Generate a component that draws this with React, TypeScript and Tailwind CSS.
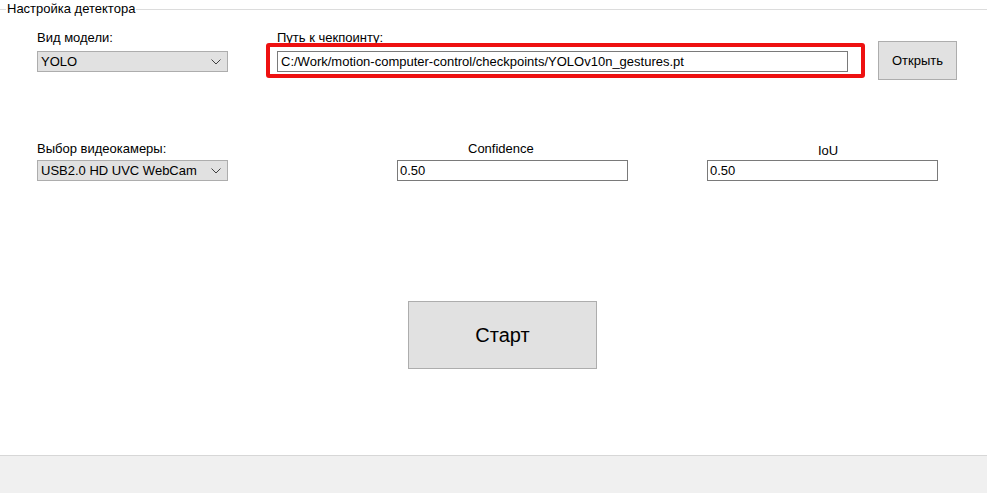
const font = { fontFamily: '"Liberation Sans", Arial, sans-serif' }

function Combo({ value }: { value: string }) {
  return (
    <div className="flex h-[21px] w-[191px] items-center justify-between border border-[#adadad] bg-[#e1e1e1] pl-[3px] pr-[6px] text-[13px] text-black">
      <span>{value}</span>
      <svg width="10" height="6" viewBox="0 0 10 6" className="mt-[1px]">
        <polyline points="0.5,0.5 5,5 9.5,0.5" fill="none" stroke="#404040" strokeWidth="1" />
      </svg>
    </div>
  )
}

function Field({ value, className = '' }: { value: string; className?: string }) {
  return (
    <div className={`flex h-[21px] items-center border border-[#7a7a7a] bg-white pl-[2px] text-[13px] text-black ${className}`}>
      {value}
    </div>
  )
}

export default function App() {
  return (
    <div className="flex h-[493px] w-[987px] flex-col overflow-hidden bg-white text-[13px] leading-[16px] text-black" style={font}>
      {/* group box title */}
      <div className="flex h-[18px] items-center">
        <div className="h-px w-[6px] bg-[#dcdcdc]" />
        <span className="px-[1px] text-[13px]">Настройка детектора</span>
        <div className="h-px flex-1 bg-[#dcdcdc]" />
      </div>

      <div className="flex flex-1 flex-col">
        {/* model + checkpoint row */}
        <div className="mt-[12px] flex items-start">
          <div className="ml-[37px] flex w-[191px] flex-col gap-[5px]">
            <span>Вид модели:</span>
            <Combo value="YOLO" />
          </div>
          <div className="ml-[49px] flex w-[571px] flex-col gap-[5px]">
            <span>Путь к чекпоинту:</span>
            <div className="relative">
              <Field value="C:/Work/motion-computer-control/checkpoints/YOLOv10n_gestures.pt" className="w-[571px] pl-[3px]" />
              <div className="pointer-events-none absolute -left-[11px] -right-[17px] -top-[8px] -bottom-[6px] rounded-[3px] border-[4px] border-[#ee1111]" />
            </div>
          </div>
          <button className="ml-[30px] mt-[11px] flex h-[39px] w-[79px] items-center justify-center border border-[#adadad] bg-[#e1e1e1] text-[13px]">
            Открыть
          </button>
        </div>

        {/* camera + thresholds row */}
        <div className="mt-[61px] flex items-start">
          <div className="ml-[37px] flex w-[191px] flex-col gap-[3px]">
            <span>Выбор видеокамеры:</span>
            <Combo value="USB2.0 HD UVC WebCam" />
          </div>
          <div className="ml-[169px] flex w-[231px] flex-col gap-[3px]">
            <span className="pl-[71px]">Confidence</span>
            <Field value="0.50" className="w-[231px]" />
          </div>
          <div className="ml-[79px] flex w-[231px] flex-col gap-[1px]">
            <span className="pl-[111px] pt-[2px]">IoU</span>
            <Field value="0.50" className="w-[231px]" />
          </div>
        </div>

        <button className="ml-[408px] mt-[120px] flex h-[68px] w-[189px] items-center justify-center border border-[#adadad] bg-[#e1e1e1] text-[20px]">
          Старт
        </button>
      </div>

      {/* status bar */}
      <div className="h-[38px] border-t border-[#d7d7d7] bg-[#f0f0f0]" />
    </div>
  )
}
